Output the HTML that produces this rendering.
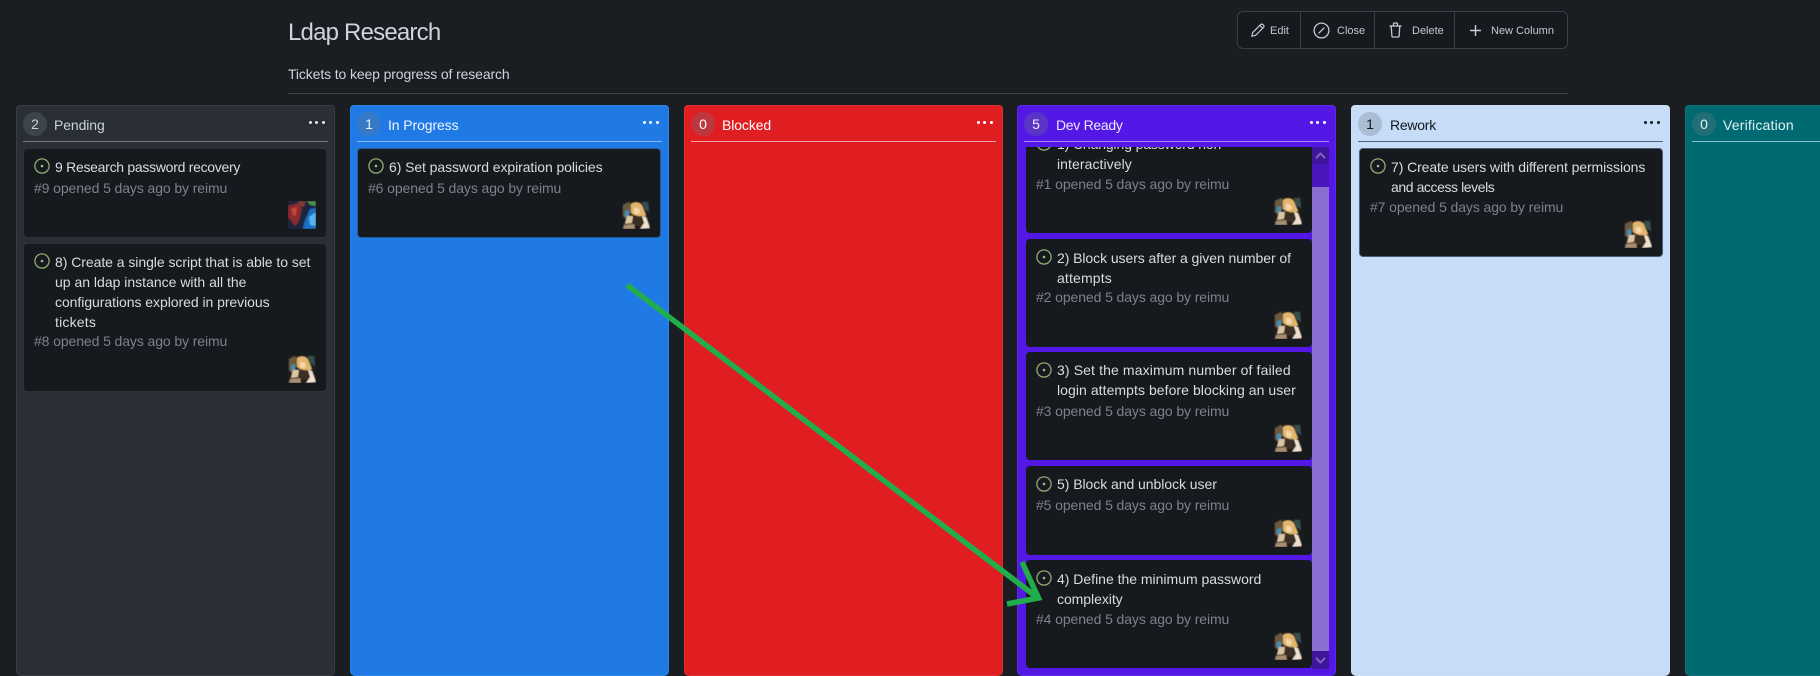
<!DOCTYPE html>
<html lang="en"><head><meta charset="utf-8"><title>Ldap Research</title>
<style>
*{box-sizing:border-box}
html,body{margin:0;padding:0;width:1820px;height:676px;overflow:hidden;background:#1a1d22;font-family:"Liberation Sans",sans-serif;color:#d8dce0}
#root{position:relative;width:1820px;height:676px;overflow:hidden}
.abs{position:absolute;white-space:nowrap}
.col{position:absolute;top:105px;height:571px;width:319px;border-radius:4px 4px 5px 5px;border:1px solid rgba(255,255,255,.07)}
.badge{position:absolute;top:6px;left:6px;width:24px;height:24px;border-radius:50%;background:rgba(110,118,129,.3);font-size:14px;line-height:24px;text-align:center}
.name{position:absolute;top:9px;left:37px;font-size:14px;line-height:20px;white-space:nowrap;letter-spacing:-.1px}
.dots{position:absolute;top:15px;right:9px;width:16px;height:4px}
.dots i{position:absolute;top:0;width:3px;height:3px;border-radius:50%;background:currentColor}
.rule{position:absolute;top:35px;left:6px;right:6px;height:1px}
.card{position:absolute;background:#16191e;border:1px solid #2e3339;border-radius:4px;overflow:hidden}
.ic{position:absolute;left:10px;top:9px;width:16px;height:16px}
.t{position:absolute;left:31px;top:8px;font-size:14px;line-height:20px;white-space:nowrap;color:#d8dce0;letter-spacing:-.05px}
.m{position:absolute;left:10px;font-size:14px;line-height:20px;white-space:nowrap;color:#7b828b;letter-spacing:-.1px}
.av{position:absolute;width:28px;height:28px;right:10px;bottom:8px}
.btnt{position:absolute;top:23px;font-size:11px;line-height:16px;color:#c3c9d0;white-space:nowrap}
.nb{border:0}
.nb .ic{top:10px}
</style></head><body><div id="root">

<svg width="0" height="0" style="position:absolute">
<defs>
<filter id="s"><feGaussianBlur stdDeviation=".4"/></filter>
<symbol id="o" viewBox="0 0 16 16"><circle cx="8" cy="8" r="7.1" fill="none" stroke="#8fae72" stroke-width="1.3"/><circle cx="8" cy="8" r="1.3" fill="#a5b98a"/></symbol>
<symbol id="a" viewBox="0 0 28 28">
<g filter="url(#s)">
<rect width="28" height="28" fill="#1d1c1b"/>
<path d="M1 4L7 1 10 5 8 13 4 18 1 15Z" fill="#6a5a42"/>
<path d="M20 1L26 1 27 11 22 8Z" fill="#34504f"/>
<path d="M9 3C13 0 20 1 21 7L24 14C21 17 15 15 12 14L9 12Z" fill="#e2b56c"/>
<path d="M12 7C15 6 18 8 18 11C17 14 14 14 12 12Z" fill="#f4d6aa"/>
<path d="M3 10L7 9 7 15 3 16Z" fill="#3f8fb0"/>
<path d="M5 15L11 15 10 22 3 23Z" fill="#dcc4a4"/>
<path d="M11 16L20 15 20 25 12 25Z" fill="#3e2f24"/>
<path d="M20 15L24 16 28 27 18 28 22 22Z" fill="#f0e2cf"/>
<path d="M2 24L12 23 13 28 1 28Z" fill="#a88f72"/>
</g>
</symbol>
<symbol id="b" viewBox="0 0 28 28">
<g filter="url(#s)">
<rect width="28" height="28" fill="#1b2540"/>
<path d="M0 5L10 2 14 8 11 20 7 25 0 16Z" fill="#8c2a2e"/>
<path d="M3 8L9 6 8 15 5 14Z" fill="#c5453a"/>
<path d="M10 0H18L16 6 11 5Z" fill="#7a3a30"/>
<path d="M19 0H28V5L22 4Z" fill="#4f8c48"/>
<path d="M16 22L22 8 28 7V28H15Z" fill="#1f6fc0"/>
<path d="M21 16L28 11V25L22 24Z" fill="#56b4f0"/>
</g>
</symbol>
</defs>
</svg>

<div class="abs" style="left:288px;top:18px;font-size:24px;line-height:30px;color:#cfd4da;letter-spacing:-.8px">Ldap Research</div>
<div class="abs" style="left:288px;top:64px;font-size:14px;line-height:20px;color:#cfd4da;letter-spacing:-.12px">Tickets to keep progress of research</div>
<div class="abs" style="left:288px;top:93px;width:1280px;height:1px;background:#3d4249"></div>

<div class="abs" style="left:1237px;top:11px;width:331px;height:38px;background:#16191e;border:1px solid #3a3f46;border-radius:6px"></div>
<div class="abs" style="left:1300px;top:12px;width:1px;height:36px;background:#3a3f46"></div>
<div class="abs" style="left:1374px;top:12px;width:1px;height:36px;background:#3a3f46"></div>
<div class="abs" style="left:1454px;top:12px;width:1px;height:36px;background:#3a3f46"></div>
<svg class="abs" style="left:1250px;top:22px" width="16" height="16" viewBox="0 0 16 16" fill="none" stroke="#c3c9d0" stroke-width="1.2" stroke-linejoin="round"><path d="M1.8 14.2l.9-3.6 7.9-8a1.6 1.6 0 0 1 2.3 0l.6.6a1.6 1.6 0 0 1 0 2.3l-8 7.9z"/><path d="M9.800 3.400l2.900 2.900"/></svg>
<div class="btnt" style="left:1270px">Edit</div>
<svg class="abs" style="left:1313px;top:22px" width="17" height="17" viewBox="0 0 17 17" fill="none" stroke="#c3c9d0" stroke-width="1.3"><circle cx="8.500" cy="8.500" r="7.400"/><path d="M5.600 11.400l5.800-5.800"/></svg>
<div class="btnt" style="left:1337px">Close</div>
<svg class="abs" style="left:1389px;top:22px" width="13" height="16" viewBox="0 0 13 16" fill="none" stroke="#c3c9d0" stroke-width="1.3"><path d="M.5 4h12"/><path d="M4.500 4V2a1 1 0 0 1 1-1h2a1 1 0 0 1 1 1v2"/><path d="M2.200 4l.7 10a1 1 0 0 0 1 1h5.200a1 1 0 0 0 1-1l.7-10"/></svg>
<div class="btnt" style="left:1412px">Delete</div>
<svg class="abs" style="left:1469px;top:24px" width="13" height="13" viewBox="0 0 13 13" fill="none" stroke="#c9ced4" stroke-width="1.4"><path d="M6.500 1v11M1 6.500h11"/></svg>
<div class="btnt" style="left:1491px">New Column</div>

<!-- Pending -->
<div class="col" style="left:16px;background:#2a2e36;color:#c9d1d9">
<div class="badge">2</div><div class="name">Pending</div><div class="dots" style="color:#e6e8ea"><i style="left:0"></i><i style="left:6px"></i><i style="left:12.500px"></i></div><div class="rule" style="background:#737880"></div>
</div>
<!-- In Progress -->
<div class="col" style="left:350px;background:#1f7ae5;color:#eef5fd">
<div class="badge">1</div><div class="name">In Progress</div><div class="dots" style="color:#fff"><i style="left:0"></i><i style="left:6px"></i><i style="left:12.500px"></i></div><div class="rule" style="background:#84b8f2"></div>
</div>
<!-- Blocked -->
<div class="col" style="left:684px;background:#e01e22;color:#fff">
<div class="badge">0</div><div class="name">Blocked</div><div class="dots" style="color:#fff"><i style="left:0"></i><i style="left:6px"></i><i style="left:12.500px"></i></div><div class="rule" style="background:#f0a0a2"></div>
</div>
<!-- Dev Ready -->
<div class="col" style="left:1017px;background:#5318e6;color:#eee9fd">
<div class="badge">5</div><div class="name" style="left:38px;letter-spacing:-.3px">Dev Ready</div><div class="dots" style="color:#fff"><i style="left:0"></i><i style="left:6px"></i><i style="left:12.500px"></i></div><div class="rule" style="background:#a68eee"></div>
</div>
<!-- Rework -->
<div class="col" style="left:1351px;background:#c6dcf7;color:#14181e">
<div class="badge">1</div><div class="name" style="left:38px;letter-spacing:-.25px">Rework</div><div class="dots" style="color:#14181e"><i style="left:0"></i><i style="left:6px"></i><i style="left:12.500px"></i></div><div class="rule" style="background:#56667c"></div>
</div>
<!-- Verification -->
<div class="col" style="left:1685px;width:160px;background:#006a72;color:#e4f1f2">
<div class="badge">0</div><div class="name" style="letter-spacing:.2px">Verification</div><div class="rule" style="background:#8cc0c4;right:-4px"></div>
</div>

<!-- Pending cards -->
<div class="card" style="left:23px;top:148px;width:304px;height:90px"><svg class="ic"><use href="#o"/></svg><div class="t" style="letter-spacing:-.28px">9 Research password recovery</div><div class="m" style="top:29px">#9 opened 5 days ago by reimu</div><svg class="av"><use href="#b"/></svg></div>
<div class="card" style="left:23px;top:243px;width:304px;height:149px"><svg class="ic"><use href="#o"/></svg><div class="t">8) Create a single script that is able to set<br><span style="letter-spacing:0">up an ldap instance with all the</span><br>configurations explored in previous<br><span style="letter-spacing:.2px">tickets</span></div><div class="m" style="top:87px">#8 opened 5 days ago by reimu</div><svg class="av"><use href="#a"/></svg></div>

<!-- In Progress card -->
<div class="card" style="left:357px;top:148px;width:304px;height:90px;border-color:#2c5a94"><svg class="ic"><use href="#o"/></svg><div class="t" style="letter-spacing:-.08px">6) Set password expiration policies</div><div class="m" style="top:29px">#6 opened 5 days ago by reimu</div><svg class="av"><use href="#a"/></svg></div>

<!-- Dev Ready cards -->
<div class="abs" style="left:1026px;top:147px;width:286px;height:522px;overflow:hidden">
<div class="card nb" style="left:0;top:-22px;width:286px;height:108px"><svg class="ic"><use href="#o"/></svg><div class="t" style="top:9px"><span style="letter-spacing:-.13px">1) Changing password non</span><br><span style="letter-spacing:.07px">interactively</span></div><div class="m" style="top:49px">#1 opened 5 days ago by reimu</div><svg class="av"><use href="#a"/></svg></div>
<div class="card nb" style="left:0;top:92px;width:286px;height:108px"><svg class="ic"><use href="#o"/></svg><div class="t" style="top:9px"><span style="letter-spacing:-.07px">2) Block users after a given number of</span><br><span style="letter-spacing:.15px">attempts</span></div><div class="m" style="top:48px">#2 opened 5 days ago by reimu</div><svg class="av"><use href="#a"/></svg></div>
<div class="card nb" style="left:0;top:205px;width:286px;height:108px"><svg class="ic"><use href="#o"/></svg><div class="t"><span style="letter-spacing:.12px">3) Set the maximum number of failed</span><br><span style="letter-spacing:.06px">login attempts before blocking an user</span></div><div class="m" style="top:49px">#3 opened 5 days ago by reimu</div><svg class="av"><use href="#a"/></svg></div>
<div class="card nb" style="left:0;top:319px;width:286px;height:89px"><svg class="ic"><use href="#o"/></svg><div class="t">5) Block and unblock user</div><div class="m" style="top:29px">#5 opened 5 days ago by reimu</div><svg class="av"><use href="#a"/></svg></div>
<div class="card nb" style="left:0;top:413px;width:286px;height:108px"><svg class="ic"><use href="#o"/></svg><div class="t" style="top:9px"><span style="letter-spacing:-.01px">4) Define the minimum password</span><br>complexity</div><div class="m" style="top:49px">#4 opened 5 days ago by reimu</div><svg class="av"><use href="#a"/></svg></div>
</div>
<div class="abs" style="left:1312px;top:147px;width:17px;height:522px;background:#4a16bd"></div>
<div class="abs" style="left:1312px;top:147px;width:17px;height:17px;background:#3f1699"></div>
<div class="abs" style="left:1312px;top:187px;width:17px;height:464px;background:#8b6fd0"></div>
<div class="abs" style="left:1312px;top:651px;width:17px;height:18px;background:#3f1699"></div>
<svg class="abs" style="left:1312px;top:147px" width="17" height="17" viewBox="0 0 17 17" fill="none" stroke="#7d62c6" stroke-width="2"><path d="M4 11l4.500-4.500L13 11"/></svg>
<svg class="abs" style="left:1312px;top:652px" width="17" height="17" viewBox="0 0 17 17" fill="none" stroke="#7d62c6" stroke-width="2"><path d="M4 6l4.500 4.500L13 6"/></svg>

<!-- Rework card -->
<div class="card" style="left:1359px;top:148px;width:304px;height:109px;border-color:#4e5c70"><svg class="ic"><use href="#o"/></svg><div class="t"><span style="letter-spacing:-.09px">7) Create users with different permissions</span><br><span style="letter-spacing:-.42px">and access levels</span></div><div class="m" style="top:48px">#7 opened 5 days ago by reimu</div><svg class="av"><use href="#a"/></svg></div>

<!-- Arrow -->
<svg class="abs" style="left:0;top:0" width="1820" height="676" fill="none" stroke="#22ad4d" stroke-width="5.500" stroke-linejoin="miter"><path d="M627 285L1038 598"/><path d="M1022 562L1038.500 598L1007 604"/></svg>

</div></body></html>
